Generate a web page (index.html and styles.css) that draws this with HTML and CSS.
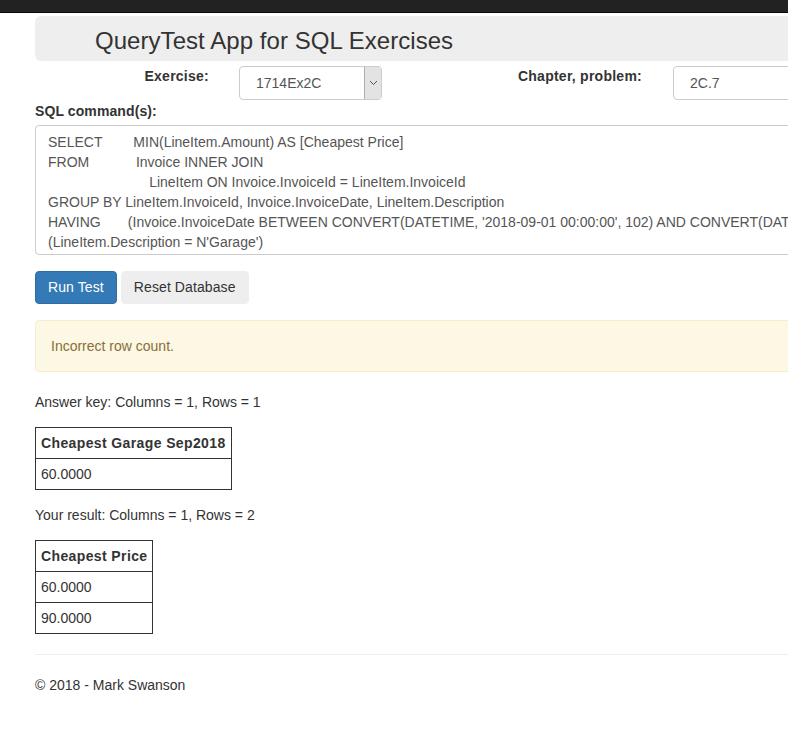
FILE: index.html
```html
<!DOCTYPE html>
<html lang="en">
<head>
<meta charset="utf-8">
<title>QueryTest App for SQL Exercises</title>
<link rel="stylesheet" href="styles.css">
</head>
<body>
<div class="topbar"></div>
<div class="page">
  <div class="container">
    <div class="header"><h1 class="title">QueryTest App for SQL Exercises</h1></div>
    <div class="form-row">
      <label class="lbl lbl-ex">Exercise:</label>
      <div class="select">
        <span class="select-text">1714Ex2C</span>
        <span class="select-arrow"><svg width="9" height="6" viewBox="0 0 9 6"><polyline points="1,1 4.5,4.5 8,1" fill="none" stroke="#555" stroke-width="1"/></svg></span>
      </div>
      <label class="lbl lbl-ch">Chapter, problem:</label>
      <div class="input">2C.7</div>
    </div>
    <div class="sql-label">SQL command(s):</div>
    <div class="sql">SELECT        MIN(LineItem.Amount) AS [Cheapest Price]
FROM            Invoice INNER JOIN
                          LineItem ON Invoice.InvoiceId = LineItem.InvoiceId
GROUP BY LineItem.InvoiceId, Invoice.InvoiceDate, LineItem.Description
HAVING       (Invoice.InvoiceDate BETWEEN CONVERT(DATETIME, '2018-09-01 00:00:00', 102) AND CONVERT(DATETIME, '2018-09-30 00:00:00', 102)) AND
(LineItem.Description = N'Garage')</div>
    <div class="buttons">
      <button class="btn btn-primary">Run Test</button>
      <button class="btn btn-default">Reset Database</button>
    </div>
    <div class="alert">Incorrect row count.</div>
    <p class="info">Answer key: Columns = 1, Rows = 1</p>
    <table class="result">
      <tr><th>Cheapest Garage Sep2018</th></tr>
      <tr><td>60.0000</td></tr>
    </table>
    <p class="info">Your result: Columns = 1, Rows = 2</p>
    <table class="result">
      <tr><th>Cheapest Price</th></tr>
      <tr><td>60.0000</td></tr>
      <tr><td>90.0000</td></tr>
    </table>
    <hr class="sep">
    <footer class="footer">© 2018 - Mark Swanson</footer>
  </div>
</div>
</body>
</html>
```
FILE: styles.css
```css
html, body {
  margin: 0;
  padding: 0;
  background: #fff;
}
body {
  font-family: "Liberation Sans", Arial, sans-serif;
  font-size: 14px;
  line-height: 20px;
  color: #333;
  overflow: hidden;
}
.topbar {
  height: 12px;
  background: #222;
  border-bottom: 1px solid #080808;
}
.page {
  overflow: hidden;
  width: 100%;
}
.container {
  width: 1170px;
  margin-left: 35px;
  padding-top: 3px;
}
.header {
  background: #eee;
  border-radius: 6px;
  height: 45px;
  display: flex;
  align-items: center;
  padding-left: 60px;
  margin-bottom: 5px;
}
.title {
  margin: 0;
  font-size: 24px;
  font-weight: normal;
  line-height: 28px;
  color: #333;
  padding-top: 5px;
  letter-spacing: 0.05px;
}
.form-row {
  display: flex;
  align-items: flex-start;
  height: 34px;
}
.lbl {
  font-weight: bold;
  text-align: right;
  line-height: 20px;
  letter-spacing: 0.25px;
}
.lbl-ex {
  width: 174px;
  margin-right: 30px;
}
.lbl-ch {
  width: 260px;
  margin-right: 31px;
}
.select {
  width: 143px;
  height: 34px;
  box-sizing: border-box;
  border: 1px solid #ccc;
  border-radius: 4px;
  display: flex;
  align-items: stretch;
  color: #555;
  overflow: hidden;
}
.select-text {
  flex: 1;
  padding-left: 16px;
  line-height: 32px;
}
.select-arrow {
  width: 16px;
  background: #e3e3e3;
  border-left: 1px solid #adadad;
  display: flex;
  align-items: center;
  justify-content: center;
}
.input {
  width: 300px;
  height: 34px;
  box-sizing: border-box;
  border: 1px solid #ccc;
  border-radius: 4px;
  padding-left: 16px;
  line-height: 32px;
  color: #555;
}
.sql-label {
  font-weight: bold;
  letter-spacing: 0.1px;
  margin-top: 1px;
  margin-bottom: 4px;
}
.sql {
  height: 130px;
  box-sizing: border-box;
  border: 1px solid #ccc;
  border-radius: 4px;
  padding: 6px 12px;
  white-space: pre;
  overflow: hidden;
  color: #555;
  line-height: 20px;
}
.buttons {
  margin-top: 16px;
  display: flex;
  gap: 4px;
}
.btn {
  font-family: "Liberation Sans", Arial, sans-serif;
  font-size: 14px;
  line-height: 20px;
  height: 33px;
  padding: 5px 12px 6px;
  border-radius: 4px;
  border: 1px solid transparent;
  cursor: pointer;
  letter-spacing: 0.1px;
}
.btn-primary {
  background: #337ab7;
  border-color: #2e6da4;
  color: #fff;
}
.btn-default {
  background: #eee;
  border-color: #eee;
  color: #333;
}
.alert {
  margin-top: 16px;
  margin-bottom: 20px;
  padding: 15px;
  background: #fcf8e3;
  border: 1px solid #faebcc;
  border-radius: 4px;
  color: #8a6d3b;
}
.info {
  margin: 0 0 15px;
}
.result {
  border-collapse: collapse;
  margin-bottom: 15px;
}
.result th, .result td {
  border: 1px solid #333;
  padding: 5px;
  text-align: left;
  line-height: 20px;
}
.result th {
  font-weight: bold;
  letter-spacing: 0.38px;
}
.sep {
  border: 0;
  border-top: 1px solid #eee;
  margin: 20px 0;
}
.footer {
  line-height: 20px;
}
```
